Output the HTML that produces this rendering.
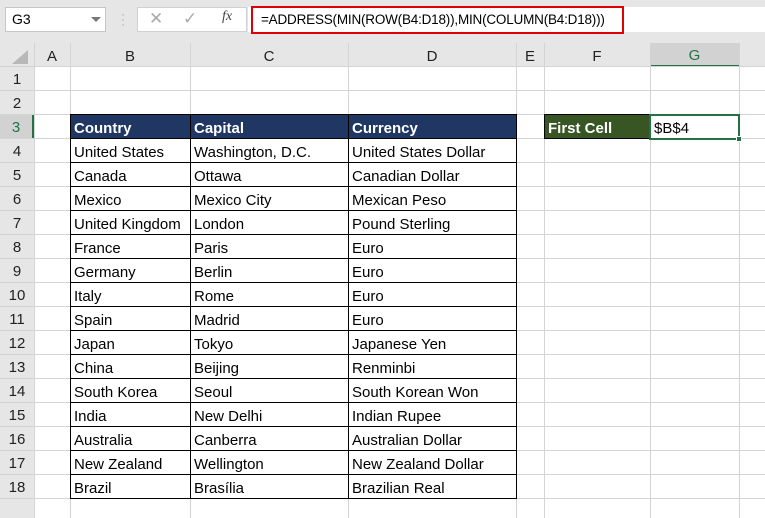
<!DOCTYPE html>
<html><head><style>
*{margin:0;padding:0;box-sizing:border-box}
body{width:765px;height:518px;overflow:hidden;background:#fff;font-family:"Liberation Sans",Calibri,sans-serif;position:relative}
.top{position:absolute;left:0;top:0;width:765px;height:43px;background:#e6e6e6}
.abs{position:absolute}
.hdr{position:absolute;background:#e6e6e6;color:#222;font-size:15px;display:flex;align-items:center;justify-content:center;padding-top:2px}
.vl{position:absolute;width:1px;background:#d4d4d4}
.hl{position:absolute;height:1px;background:#d4d4d4}
.c{position:absolute;font-size:15px;padding-left:4px;line-height:24px;height:24px;padding-top:2px;white-space:nowrap;overflow:hidden;color:#000}
</style></head><body>
<div class="top"></div>
<div class="abs" style="left:5px;top:7px;width:101px;height:25px;background:#fff;border:1px solid #c6c6c6;font-size:14px;line-height:23px;padding-left:6px">G3</div>
<div class="abs" style="left:91px;top:17px;width:0;height:0;border-left:5px solid transparent;border-right:5px solid transparent;border-top:5px solid #777"></div>
<div class="abs" style="left:121px;top:12px;color:#aaa;font-size:12px;line-height:5px">·<br>·<br>·</div>
<div class="abs" style="left:137px;top:7px;width:110px;height:25px;background:#fff;border:1px solid #d0d0d0"></div>
<div class="abs" style="left:149px;top:9px;color:#aaa;font-size:17px">✕</div>
<div class="abs" style="left:183px;top:9px;color:#aaa;font-size:17px">✓</div>
<div class="abs" style="left:222px;top:9px;color:#444;font-size:14px;font-style:italic;font-family:'Liberation Serif',serif">fx</div>
<div class="abs" style="left:248px;top:7px;width:517px;height:25px;background:#fff"></div>
<div class="abs" style="left:251px;top:6px;width:373px;height:28px;border:2px solid #e00000;font-size:13.5px;line-height:24px;padding-left:8px;letter-spacing:-0.2px;white-space:nowrap;overflow:hidden">=ADDRESS(MIN(ROW(B4:D18)),MIN(COLUMN(B4:D18)))</div>

<div class="hdr" style="left:0;top:43px;width:765px;height:24px"></div>
<div class="abs" style="left:0;top:67px;width:34px;height:451px;background:#e6e6e6"></div>
<div class="abs" style="left:12px;top:50px;width:0;height:0;border-left:16px solid transparent;border-bottom:14px solid #b8b8b8"></div>
<div class="hdr" style="left:34px;top:43px;width:36px;height:24px">A</div>
<div class="hdr" style="left:70px;top:43px;width:120px;height:24px">B</div>
<div class="hdr" style="left:190px;top:43px;width:158px;height:24px">C</div>
<div class="hdr" style="left:348px;top:43px;width:168px;height:24px">D</div>
<div class="hdr" style="left:516px;top:43px;width:28px;height:24px">E</div>
<div class="hdr" style="left:544px;top:43px;width:106px;height:24px">F</div>
<div class="hdr" style="left:650px;top:43px;width:89px;height:24px;background:#d2d2d2;color:#217346;border-bottom:2px solid #217346">G</div>

<div id="grid"></div>
<script>
var g='';var xs=[34,70,190,348,516,544,650,739];
xs.forEach(function(x){g+='<div class="vl" style="left:'+x+'px;top:43px;height:475px"></div>'});
for(var r=1;r<=19;r++){var y=67+24*(r-1);g+='<div class="hl" style="left:0;top:'+(y-1)+'px;width:765px"></div>';
if(r<=18)g+='<div class="hdr" style="left:0;top:'+y+'px;width:34px;height:23px;'+(r==3?'background:#d2d2d2;color:#217346;border-right:2px solid #217346':'')+'">'+r+'</div>';}
var d=[["United States","Washington, D.C.","United States Dollar"],["Canada","Ottawa","Canadian Dollar"],["Mexico","Mexico City","Mexican Peso"],["United Kingdom","London","Pound Sterling"],["France","Paris","Euro"],["Germany","Berlin","Euro"],["Italy","Rome","Euro"],["Spain","Madrid","Euro"],["Japan","Tokyo","Japanese Yen"],["China","Beijing","Renminbi"],["South Korea","Seoul","South Korean Won"],["India","New Delhi","Indian Rupee"],["Australia","Canberra","Australian Dollar"],["New Zealand","Wellington","New Zealand Dollar"],["Brazil","Brasília","Brazilian Real"]];
var cx=[[70,120],[190,158],[348,168]];
g+='<div class="abs" style="left:70px;top:114px;width:447px;height:25px;background:#203764"></div>';
["Country","Capital","Currency"].forEach(function(t,i){g+='<div class="c" style="left:'+cx[i][0]+'px;top:115px;width:'+cx[i][1]+'px;color:#fff;font-weight:bold">'+t+'</div>'});
d.forEach(function(row,j){var y=139+24*j;row.forEach(function(t,i){g+='<div class="c" style="left:'+cx[i][0]+'px;top:'+y+'px;width:'+cx[i][1]+'px">'+t+'</div>'})});
for(var k=0;k<=16;k++){g+='<div class="abs" style="left:70px;top:'+(114+24*k)+'px;width:447px;height:1px;background:#000"></div>'}
[70,190,348,516].forEach(function(x){g+='<div class="abs" style="left:'+x+'px;top:114px;width:1px;height:385px;background:#000"></div>'});
g+='<div class="abs" style="left:544px;top:114px;width:107px;height:25px;background:#375623;border:1px solid #000"></div><div class="c" style="left:544px;top:115px;width:106px;color:#fff;font-weight:bold">First Cell</div>';
g+='<div class="abs" style="left:649px;top:114px;width:91px;height:26px;border:2px solid #217346;background:#fff"></div><div class="c" style="left:650px;top:115px;width:88px">$B$4</div><div class="abs" style="left:736px;top:136px;width:6px;height:6px;background:#217346;border:1px solid #fff"></div>';
document.getElementById('grid').innerHTML=g;
</script>
</body></html>
